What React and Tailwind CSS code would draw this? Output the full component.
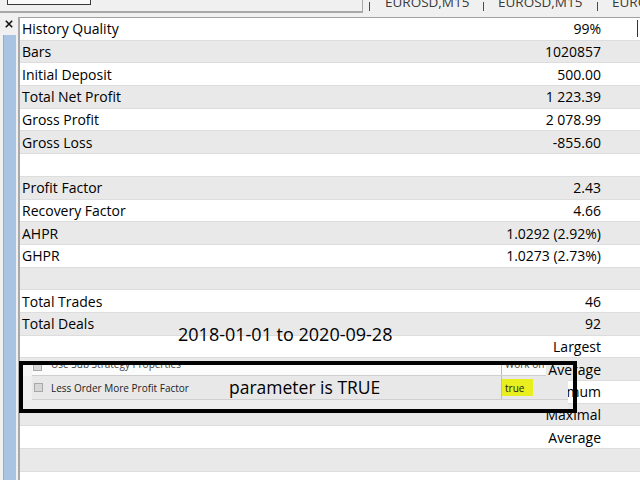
import React from "react";

const rows = [
  ["History Quality", "99%"],
  ["Bars", "1020857"],
  ["Initial Deposit", "500.00"],
  ["Total Net Profit", "1 223.39"],
  ["Gross Profit", "2 078.99"],
  ["Gross Loss", "-855.60"],
  ["", ""],
  ["Profit Factor", "2.43"],
  ["Recovery Factor", "4.66"],
  ["AHPR", "1.0292 (2.92%)"],
  ["GHPR", "1.0273 (2.73%)"],
  ["", ""],
  ["Total Trades", "46"],
  ["Total Deals", "92"],
  ["", "Largest"],
  ["", "Average"],
  ["", "Minimum"],
  ["", "Maximal"],
  ["", "Average"],
  ["", ""],
  ["", ""],
];

function Tab({ pl }) {
  return (
    <div className="flex items-start shrink-0">
      <div className="w-px h-[9px] mt-[2px] bg-[#4a4a4a]" />
      <div className={`w-[113px] h-[10px] overflow-hidden ${pl}`}>
        <div className="mt-[-4px] text-[13.5px] leading-none text-[#3a3a3a] whitespace-nowrap">
          EUROSD,M15
        </div>
      </div>
    </div>
  );
}

export default function App() {
  return (
    <div className="relative w-[640px] h-[480px] overflow-hidden bg-[#f0f0f0] font-['Open_Sans',sans-serif] text-black">
      {/* top tab strip */}
      <div className="flex h-[17px] items-start">
        <div className="w-[363px] h-[13px] shrink-0 border-b-2 border-r border-[#a8a8a8]">
          <div className="ml-[7px] w-[84px] h-[5px] border border-t-0 border-[#3a3a3a] bg-[#fafafa]" />
        </div>
        <div className="ml-[6px] flex">
          <Tab pl="pl-[15px]" />
          <Tab pl="pl-[14px]" />
          <Tab pl="pl-[14px]" />
        </div>
      </div>

      {/* main area */}
      <div className="flex h-[463px]">
        <div className="w-[18px] shrink-0 flex flex-col items-start">
          <svg className="ml-[5px] mt-[3px]" width="8" height="8" viewBox="0 0 8 8">
            <path d="M0.8 0.8 L7.2 7.2 M7.2 0.8 L0.8 7.2" stroke="#111" strokeWidth="1.6" />
          </svg>
          <div className="ml-[3px] mt-[7px] w-[13px] flex-1 bg-[#a9c4e3] border-l border-[#8eaed3]" />
        </div>
        <div className="w-[2px] shrink-0 bg-[#a9a9a9]" />
        <div className="flex-1 border-t border-[#a0a0a0] bg-white flex flex-col">
          {rows.map(([label, value], i) => (
            <div
              key={i}
              className={`h-[22.7px] shrink-0 flex items-center text-[14px] border-b border-[#dddddd] ${
                i % 2 === 1 ? "bg-[#e9e9e9]" : "bg-white"
              }`}
            >
              <div className="flex-1 pl-[2px] whitespace-nowrap">{label}</div>
              <div className="whitespace-nowrap">{value}</div>
              <div className="w-[39px] flex justify-end pr-[2px]">
                {i === 0 && <div className="w-px h-[17px] bg-[#333]" />}
              </div>
            </div>
          ))}
        </div>
      </div>

      {/* pasted parameter screenshot with black frame */}
      <div className="absolute left-[19px] top-[361px] w-[558px] h-[52px] border-4 border-black flex flex-col">
        <div className="flex h-[11px] shrink-0">
          <div className="w-[523px] bg-[#f4f4f4] pl-[9px] flex">
            <div className="flex-1 flex bg-[#fbfbfb] border-b border-[#cfcfcf] overflow-hidden">
              <div className="w-[469px] flex items-start overflow-hidden">
                <div className="ml-[1px] mt-[-3px] w-[9px] h-[9px] bg-[#d6d6d6] border border-[#a8a8a8]" />
                <div className="ml-[9px] mt-[-6px] text-[10px] leading-none text-[#444] whitespace-nowrap">
                  Use Sub Strategy Properties
                </div>
              </div>
              <div className="w-px bg-[#bdbdbd]" />
              <div className="pl-[3px] overflow-hidden">
                <div className="mt-[-6px] text-[10px] leading-none text-[#444] whitespace-nowrap">
                  Work on
                </div>
              </div>
            </div>
          </div>
        </div>
        <div className="flex h-[24px] shrink-0">
          <div className="w-[545px] bg-[#efefef] pl-[9px] flex">
            <div className="flex-1 flex items-center bg-[#e8e8e8] border-b border-[#d0d0d0]">
              <div className="w-[469px] flex items-center pl-[2px]">
                <div className="w-[9px] h-[9px] bg-[#d6d6d6] border border-[#a8a8a8]" />
                <div className="ml-[8px] text-[10px] leading-none text-[#222] whitespace-nowrap">
                  Less Order More Profit Factor
                </div>
              </div>
              <div className="w-px self-stretch bg-[#bdbdbd]" />
              <div className="w-[31px] h-[17px] bg-[#e9ee1e] flex items-center pl-[3px] text-[10px] leading-none text-[#222]">
                true
              </div>
            </div>
          </div>
        </div>
        <div className="h-[9px] w-[545px] bg-[#ededed]" />
      </div>

      {/* annotations */}
      <div className="absolute left-[178px] top-[325px] text-[18px] leading-none whitespace-nowrap">
        2018-01-01 to 2020-09-28
      </div>
      <div className="absolute left-[229px] top-[379px] text-[17.5px] leading-none whitespace-nowrap">
        parameter is TRUE
      </div>
    </div>
  );
}
